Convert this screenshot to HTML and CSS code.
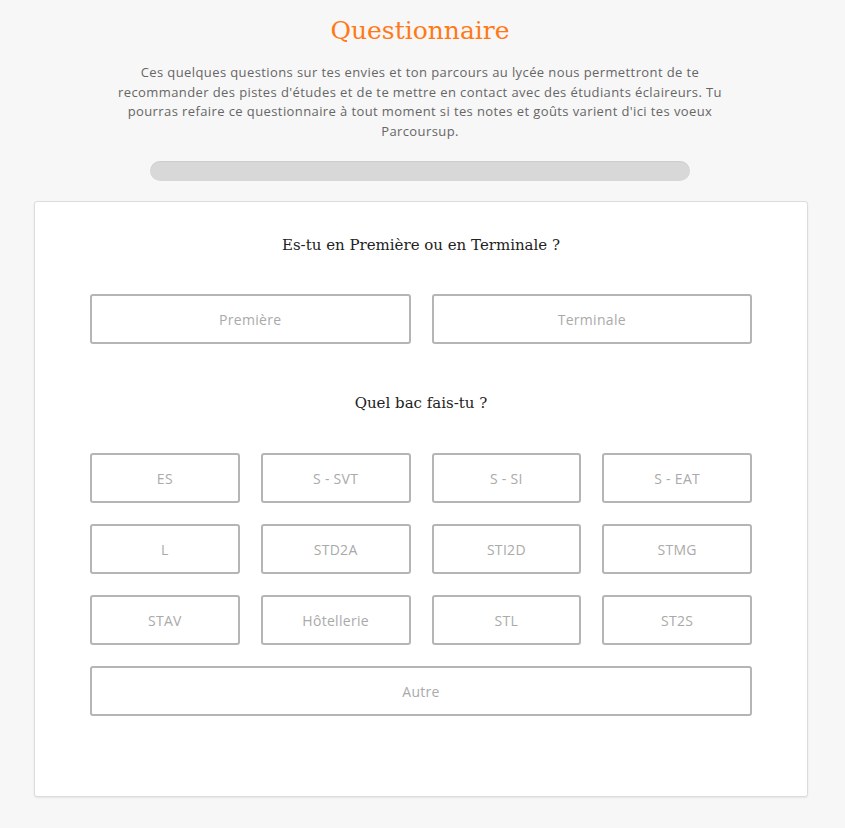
FILE: index.html
```html
<!DOCTYPE html>
<html lang="fr">
<head>
  <meta charset="utf-8">
  <title>Questionnaire</title>
  <link rel="stylesheet" href="styles.css">
</head>
<body>
  <div class="header">
    <h1>Questionnaire</h1>
    <p class="intro">Ces quelques questions sur tes envies et ton parcours au lycée nous permettront de te
    recommander des pistes d'études et de te mettre en contact avec des étudiants éclaireurs. Tu
    pourras refaire ce questionnaire à tout moment si tes notes et goûts varient d'ici tes voeux
    Parcoursup.</p>
    <div class="progress"><div class="progress-bar"></div></div>
  </div>

  <div class="card">
    <h2>Es-tu en Première ou en Terminale ?</h2>
    <div class="choices two">
      <button class="choice">Première</button>
      <button class="choice">Terminale</button>
    </div>

    <h2 class="next">Quel bac fais-tu ?</h2>
    <div class="choices four">
      <button class="choice">ES</button>
      <button class="choice">S - SVT</button>
      <button class="choice">S - SI</button>
      <button class="choice">S - EAT</button>
      <button class="choice">L</button>
      <button class="choice">STD2A</button>
      <button class="choice">STI2D</button>
      <button class="choice">STMG</button>
      <button class="choice">STAV</button>
      <button class="choice">Hôtellerie</button>
      <button class="choice">STL</button>
      <button class="choice">ST2S</button>
      <button class="choice wide">Autre</button>
    </div>
  </div>
</body>
</html>
```

FILE: styles.css
```css
body{
  margin: 0;
  padding: 0 0 30px;
  background-color: #f7f7f7;
  font-family: "Open Sans", Arial, sans-serif;
}

.header{
  text-align: center;
  padding: 15px 5px 0 0;
}

h1{
  margin: 0;
  font-family: "DejaVu Serif", "Liberation Serif", serif;
  font-size: 25px;
  font-weight: normal;
  color: #ff7a16;
  line-height: 32px;
}

.intro{
  width: 612px;
  margin: 16px auto 0;
  font-size: 13px;
  letter-spacing: 0.4px;
  line-height: 19.5px;
  color: #666666;
}

.progress{
  width: 540px;
  height: 20px;
  margin: 20px auto 0;
  border-radius: 10px;
  background-color: #d8d8d8;
  box-shadow: inset 0 1px 1px rgba(0, 0, 0, 0.06);
}

.progress-bar{
  width: 0;
  height: 100%;
}

.card{
  margin: 20px 37px 0 34px;
  padding: 32px 55px 80px;
  background-color: #ffffff;
  border: 1px solid #dcdcdc;
  border-radius: 3px;
  box-shadow: 0 1px 2px rgba(0, 0, 0, 0.08);
}

h2{
  margin: 0;
  text-align: center;
  font-family: "DejaVu Serif", "Liberation Serif", serif;
  font-size: 15px;
  font-weight: normal;
  line-height: 22px;
  color: #222222;
}

h2.next{
  margin-top: 48px;
}

.choices{
  display: grid;
  gap: 21px;
  margin-top: 38px;
}

.choices.two{
  grid-template-columns: 1fr 1fr;
}

.choices.four{
  grid-template-columns: repeat(4, 1fr);
  margin-top: 39px;
}

.choice{
  height: 50px;
  background-color: #ffffff;
  border: 2px solid #b5b5b5;
  border-radius: 3px;
  font-family: "Open Sans", Arial, sans-serif;
  font-size: 14px;
  letter-spacing: 0.3px;
  color: #aaaaaa;
  cursor: pointer;
}

.choice.wide{
  grid-column: 1 / -1;
}
```
